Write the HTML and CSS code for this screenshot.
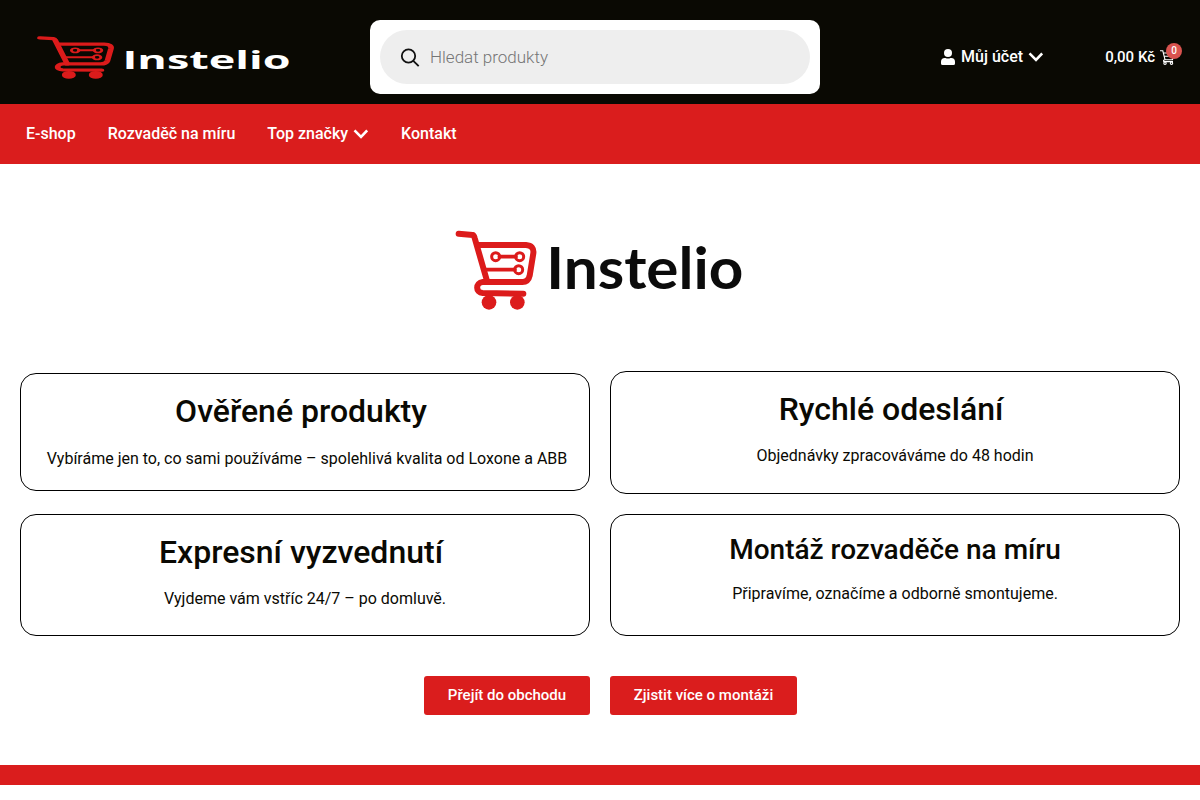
FILE: index.html
```html
<!DOCTYPE html>
<html lang="cs">
<head>
<meta charset="utf-8">
<title>Instelio</title>
<link rel="stylesheet" href="styles.css">
</head>
<body>
<svg class="defs" width="0" height="0" aria-hidden="true">
  <symbol id="cart-mark" viewBox="0 0 246 240" preserveAspectRatio="none">
    <g fill="none" stroke="currentColor" stroke-linecap="round" stroke-linejoin="round">
      <path stroke-width="18" d="M11 11 53 15Q57 16 59 24L97 156"/>
      <path stroke-width="18" d="M72 45H213Q238 47 235 70L224 137Q220 156 202 156H83C61 158 61 188 83 189L205 191"/>
      <path stroke-width="11" d="M133 80H183M93 119H180"/>
      <circle cx="122" cy="80" r="12" stroke-width="9"/>
      <circle cx="194" cy="80" r="12" stroke-width="9"/>
      <circle cx="191" cy="119" r="12" stroke-width="9"/>
    </g>
    <circle cx="102" cy="217" r="22" fill="currentColor"/>
    <circle cx="187" cy="217" r="22" fill="currentColor"/>
  </symbol>
  <symbol id="chevron" viewBox="0 0 15 10">
    <path d="M1.5 1.4 8 7.9 14.2 1.4" fill="none" stroke="currentColor" stroke-width="2.6"/>
  </symbol>
</svg>

<header class="header">
  <svg class="logo" viewBox="0 0 290 74">
    <use class="mark" href="#cart-mark" x="16.5" y="16" width="78" height="43"/>
    <text class="logo-text" transform="translate(102.5 48.8) scale(1 .62)" textLength="168" lengthAdjust="spacingAndGlyphs">Instelio</text>
  </svg>
  <div class="search">
    <label class="search-field">
      <svg width="20" height="20" viewBox="0 0 20 20"><g fill="none" stroke="#111" stroke-width="1.8"><circle cx="8.5" cy="8" r="6.7"/><path d="M13.3 12.8 18.7 18.2"/></g></svg>
      <input type="text" placeholder="Hledat produkty">
    </label>
  </div>
  <div class="account">
    <svg width="14" height="16" viewBox="0 0 14 16"><g fill="currentColor"><circle cx="7" cy="4" r="4"/><path d="M0 16V12.8Q0 9 3.8 9H4.5Q7 10.2 9.5 9H10.2Q14 9 14 12.8V14.5Q14 16 12.5 16H1.5Q0 16 0 14.5Z"/></g></svg>
    <span class="account-label">Můj účet</span>
    <svg class="account-chevron" width="15" height="10"><use href="#chevron"/></svg>
  </div>
  <div class="basket">
    <span>0,00 Kč</span>
    <span class="basket-icon">
      <svg width="15" height="15" viewBox="0 0 15 15"><g fill="none" stroke="currentColor" stroke-width="1.1"><path d="M0 .8H2.8L5 9.7H12.5L14.2 3H3.4M4.2 6.3H13M5 9.7Q3 10 3.7 11.6H13"/><circle cx="5" cy="13.2" r="1.2"/><circle cx="11.5" cy="13.2" r="1.2"/></g></svg>
      <span class="badge">0</span>
    </span>
  </div>
</header>

<nav class="nav">
  <a>E-shop</a>
  <a>Rozvaděč na míru</a>
  <a>Top značky <svg class="nav-chevron" width="15" height="10"><use href="#chevron"/></svg></a>
  <a>Kontakt</a>
</nav>

<main class="main">
  <svg class="hero-logo" viewBox="0 0 320 110">
    <use class="mark" href="#cart-mark" x="15" y="15" width="82" height="80"/>
    <text class="hero-text" x="106.3" y="74" textLength="197" lengthAdjust="spacingAndGlyphs">Instelio</text>
  </svg>
  <section class="cards">
    <article class="card card-products"><h2>Ověřené produkty</h2><p>Vybíráme jen to, co sami používáme – spolehlivá kvalita od Loxone a ABB</p></article>
    <article class="card card-shipping"><h2>Rychlé odeslání</h2><p>Objednávky zpracováváme do 48 hodin</p></article>
    <article class="card card-pickup"><h2>Expresní vyzvednutí</h2><p>Vyjdeme vám vstříc 24/7 – po domluvě.</p></article>
    <article class="card card-assembly"><h2>Montáž rozvaděče na míru</h2><p>Připravíme, označíme a odborně smontujeme.</p></article>
  </section>
  <div class="actions">
    <a class="button button-shop">Přejít do obchodu</a>
    <a class="button button-more">Zjistit více o montáži</a>
  </div>
</main>
<div class="stripe"></div>
</body>
</html>
```
FILE: styles.css
```css
* { box-sizing: border-box; }
body {
  margin: 0;
  font-family: Roboto, sans-serif;
  font-size: 16px;
  color: #0a0903;
  background: #fff;
}
svg { display: block; flex: none; }
.defs { position: absolute; }
.mark { color: #dc1b1b; }

.header {
  display: flex;
  align-items: center;
  height: 104px;
  padding: 20px 25px 10px 20px;
  background: #0a0903;
  color: #fff;
  font-weight: 500;
}
.logo { width: 290px; height: 74px; }
.logo-text { font-family: "Open Sans", sans-serif; font-weight: 700; font-size: 41px; fill: #fff; }
.search {
  width: 450px;
  height: 74px;
  margin-left: 60px;
  padding: 10px;
  border-radius: 10px;
  background: #fff;
}
.search-field {
  display: flex;
  align-items: center;
  gap: 10px;
  height: 54px;
  padding: 0 20px;
  border-radius: 27px;
  background: #eee;
}
.search-field svg { position: relative; top: 1px; }
.search-field input {
  flex: 1;
  padding: 0;
  border: 0;
  outline: 0;
  background: none;
  font: 300 17px Roboto, sans-serif;
}
.search-field input::placeholder { color: #757575; }
.account { display: flex; align-items: center; gap: 6px; margin-left: 121px; }
.account-label { padding-bottom: 2px; }
.account-chevron { margin-left: -1px; }
.basket { display: flex; align-items: center; gap: 5px; margin-left: auto; font-size: 15px; }
.basket-icon { position: relative; }
.badge {
  position: absolute;
  top: -7px;
  right: -7px;
  width: 16px;
  height: 16px;
  border-radius: 50%;
  background: #d9534f;
  font-size: 10px;
  line-height: 16px;
  text-align: center;
}

.nav {
  display: flex;
  align-items: center;
  gap: 32px;
  height: 60px;
  padding: 0 26px 2px;
  background: #da1d1d;
  color: #fff;
  font-weight: 500;
}
.nav a { display: flex; align-items: center; gap: 6px; }
.nav-chevron { margin: 2px 1px 0 -1px; }

.main { height: 601px; padding: 51px 20px 0; }
.hero-logo { width: 320px; height: 110px; margin: 0 auto; }
.hero-text { font-family: Lato, sans-serif; font-weight: 700; font-size: 58px; fill: #0b0b0b; }
.cards {
  display: grid;
  grid-template-columns: 570px 570px;
  grid-template-rows: 123px 122px;
  gap: 20px;
  align-items: center;
  margin-top: 46px;
}
.card {
  height: 122px;
  padding: 20px 20px 0;
  border: 1px solid #000;
  border-radius: 16px;
  text-align: center;
}
.card h2 { margin: 0 8px 0 0; font-size: 32px; font-weight: 500; line-height: 35px; }
.card p { margin: 18px 0 0; line-height: 24px; white-space: nowrap; }
.card-products { height: 118px; margin-bottom: 1px; }
.card-products p { margin: 18px 0 0 4px; }
.card-shipping { height: 123px; }
.card-shipping p { margin-top: 17px; }
.card-pickup p { margin-top: 17px; }
.card-assembly h2 { margin: 0; font-size: 28px; line-height: 30px; }
.card-assembly p { margin-top: 17px; }
.actions { display: flex; justify-content: center; gap: 20px; margin-top: 40px; padding-left: 21px; }
.button {
  height: 39px;
  border-radius: 3px;
  background: #da1d1d;
  color: #fff;
  font-size: 15px;
  font-weight: 500;
  line-height: 38px;
  text-align: center;
}
.button-shop { width: 166px; }
.button-more { width: 187px; }
.stripe { height: 20px; background: #da1d1d; }
```
